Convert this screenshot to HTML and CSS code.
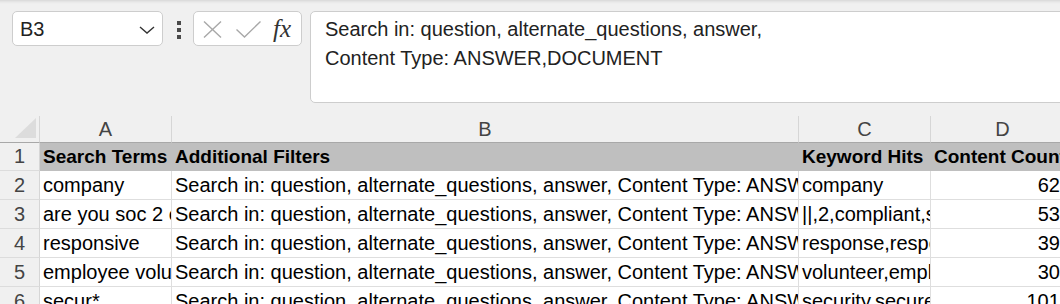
FILE: index.html
```html
<!DOCTYPE html>
<html>
<head>
<meta charset="utf-8">
<link rel="stylesheet" href="styles.css">
</head>
<body>
<div class="toolbar">
  <div class="namebox">
    <span class="cellref">B3</span>
    <svg class="chev" width="16" height="8" viewBox="0 0 16 8"><path d="M1 1 L8 7 L15 1" fill="none" stroke="#333" stroke-width="1.4"/></svg>
  </div>
  <div class="dots"><span></span><span></span><span></span></div>
  <div class="fxbox">
    <svg class="ico-x" width="19" height="17" viewBox="0 0 19 17"><path d="M1 0.5 L18 16.5 M18 0.5 L1 16.5" fill="none" stroke="#a8a8a8" stroke-width="1.4"/></svg>
    <svg class="ico-check" width="25" height="17" viewBox="0 0 25 17"><path d="M0.5 8.5 L8.5 16 L24.5 0.5" fill="none" stroke="#a8a8a8" stroke-width="1.4"/></svg>
    <span class="fx">fx</span>
  </div>
  <div class="formula">Search in: question, alternate_questions, answer,<br>Content Type: ANSWER,DOCUMENT</div>
</div>
<div class="sheet">
  <div class="corner"><span class="tri"></span></div>
  <div class="colhead">A</div>
  <div class="colhead">B</div>
  <div class="colhead">C</div>
  <div class="colhead">D</div>

  <div class="rowhead first">1</div>
  <div class="cell hdr">Search Terms</div>
  <div class="cell hdr">Additional Filters</div>
  <div class="cell hdr">Keyword Hits</div>
  <div class="cell hdr">Content Count</div>

  <div class="rowhead">2</div>
  <div class="cell">company</div>
  <div class="cell">Search in: question, alternate_questions, answer, Content Type: ANSWER,DOCUMENT</div>
  <div class="cell">company</div>
  <div class="cell num">625</div>

  <div class="rowhead">3</div>
  <div class="cell">are you soc 2 compliant</div>
  <div class="cell">Search in: question, alternate_questions, answer, Content Type: ANSWER,DOCUMENT</div>
  <div class="cell">||,2,compliant,soc</div>
  <div class="cell num">531</div>

  <div class="rowhead">4</div>
  <div class="cell">responsive</div>
  <div class="cell">Search in: question, alternate_questions, answer, Content Type: ANSWER,DOCUMENT</div>
  <div class="cell">response,responsive</div>
  <div class="cell num">392</div>

  <div class="rowhead">5</div>
  <div class="cell">employee volunteer</div>
  <div class="cell">Search in: question, alternate_questions, answer, Content Type: ANSWER,DOCUMENT</div>
  <div class="cell">volunteer,employee</div>
  <div class="cell num">304</div>

  <div class="rowhead">6</div>
  <div class="cell">secur*</div>
  <div class="cell">Search in: question, alternate_questions, answer, Content Type: ANSWER,DOCUMENT</div>
  <div class="cell">security,secure</div>
  <div class="cell num">1012</div>
</div>
</body>
</html>
```
FILE: styles.css
```css
html, body {
  margin: 0;
  padding: 0;
}
body {
  width: 1060px;
  height: 304px;
  overflow: hidden;
  background: linear-gradient(to bottom, #d8d8d8 0, #e8e8e8 2px, #f0f0f0 4px) no-repeat, #f0f0f0;
  font-family: "Liberation Sans", Arial, sans-serif;
  color: #000;
}
.toolbar {
  display: flex;
  align-items: flex-start;
  padding: 11px 0 0 12px;
  height: 116px;
  box-sizing: border-box;
  white-space: nowrap;
}
.namebox {
  box-sizing: border-box;
  width: 151px;
  height: 35px;
  background: #fff;
  border: 1px solid #cdcdcd;
  border-radius: 5px;
  display: flex;
  align-items: center;
  justify-content: space-between;
  padding: 0 7px 0 7px;
  flex: none;
}
.cellref {
  font-size: 20px;
  color: #222;
  padding-top: 1px;
}
.chev {
  display: block;
  margin-top: 2px;
}
.dots {
  flex: none;
  margin: 10px 12px 0 14px;
  display: flex;
  flex-direction: column;
  gap: 3px;
}
.dots span {
  display: block;
  width: 4px;
  height: 4px;
  background: #4a4a4a;
}
.fxbox {
  box-sizing: border-box;
  flex: none;
  width: 109px;
  height: 35px;
  background: #fff;
  border: 1px solid #cdcdcd;
  border-radius: 5px;
  display: flex;
  align-items: center;
  padding-left: 9px;
}
.ico-x {
  display: block;
  margin-top: 2px;
}
.ico-check {
  display: block;
  margin: 2px 0 0 14px;
}
.fx {
  font-family: "Liberation Serif", "DejaVu Serif", serif;
  font-style: italic;
  font-size: 25px;
  color: #333;
  margin-left: 12px;
  line-height: 1;
}
.formula {
  box-sizing: border-box;
  flex: none;
  margin-left: 8px;
  width: 780px;
  height: 92px;
  background: #fff;
  border: 1px solid #cdcdcd;
  border-radius: 5px;
  padding: 3px 14px;
  font-size: 20px;
  line-height: 29px;
  color: #222;
}
.sheet {
  display: grid;
  grid-template-columns: 40px 132px 627px 132px 144px;
  grid-template-rows: 27px 28px 29px 29px 29px 29px 29px;
  width: 1104px;
}
.corner {
  position: relative;
  border-right: 1px solid #d6d6d6;
  border-bottom: 1px solid #a8a8a8;
}
.tri {
  position: absolute;
  right: 3px;
  bottom: 4px;
  width: 0;
  height: 0;
  border-left: 21px solid transparent;
  border-bottom: 20px solid #dcdcdc;
}
.colhead {
  border-right: 1px solid #d6d6d6;
  border-bottom: 1px solid #a8a8a8;
  text-align: center;
  font-size: 20px;
  line-height: 27px;
  color: #444;
}
.rowhead {
  border-right: 1px solid #d6d6d6;
  border-bottom: 1px solid #dcdcdc;
  text-align: center;
  font-size: 20px;
  line-height: 28px;
  color: #444;
}
.rowhead.first {
  line-height: 27px;
}
.cell {
  background: #fff;
  border-right: 1px solid #dedede;
  border-bottom: 1px solid #dedede;
  padding: 0 3px;
  font-size: 20px;
  line-height: 28px;
  white-space: nowrap;
  overflow: hidden;
}
.cell.hdr {
  background: #bfbfbf;
  border-color: #bfbfbf;
  font-weight: bold;
  font-size: 19px;
  line-height: 27px;
}
.cell.num {
  text-align: right;
}
```
